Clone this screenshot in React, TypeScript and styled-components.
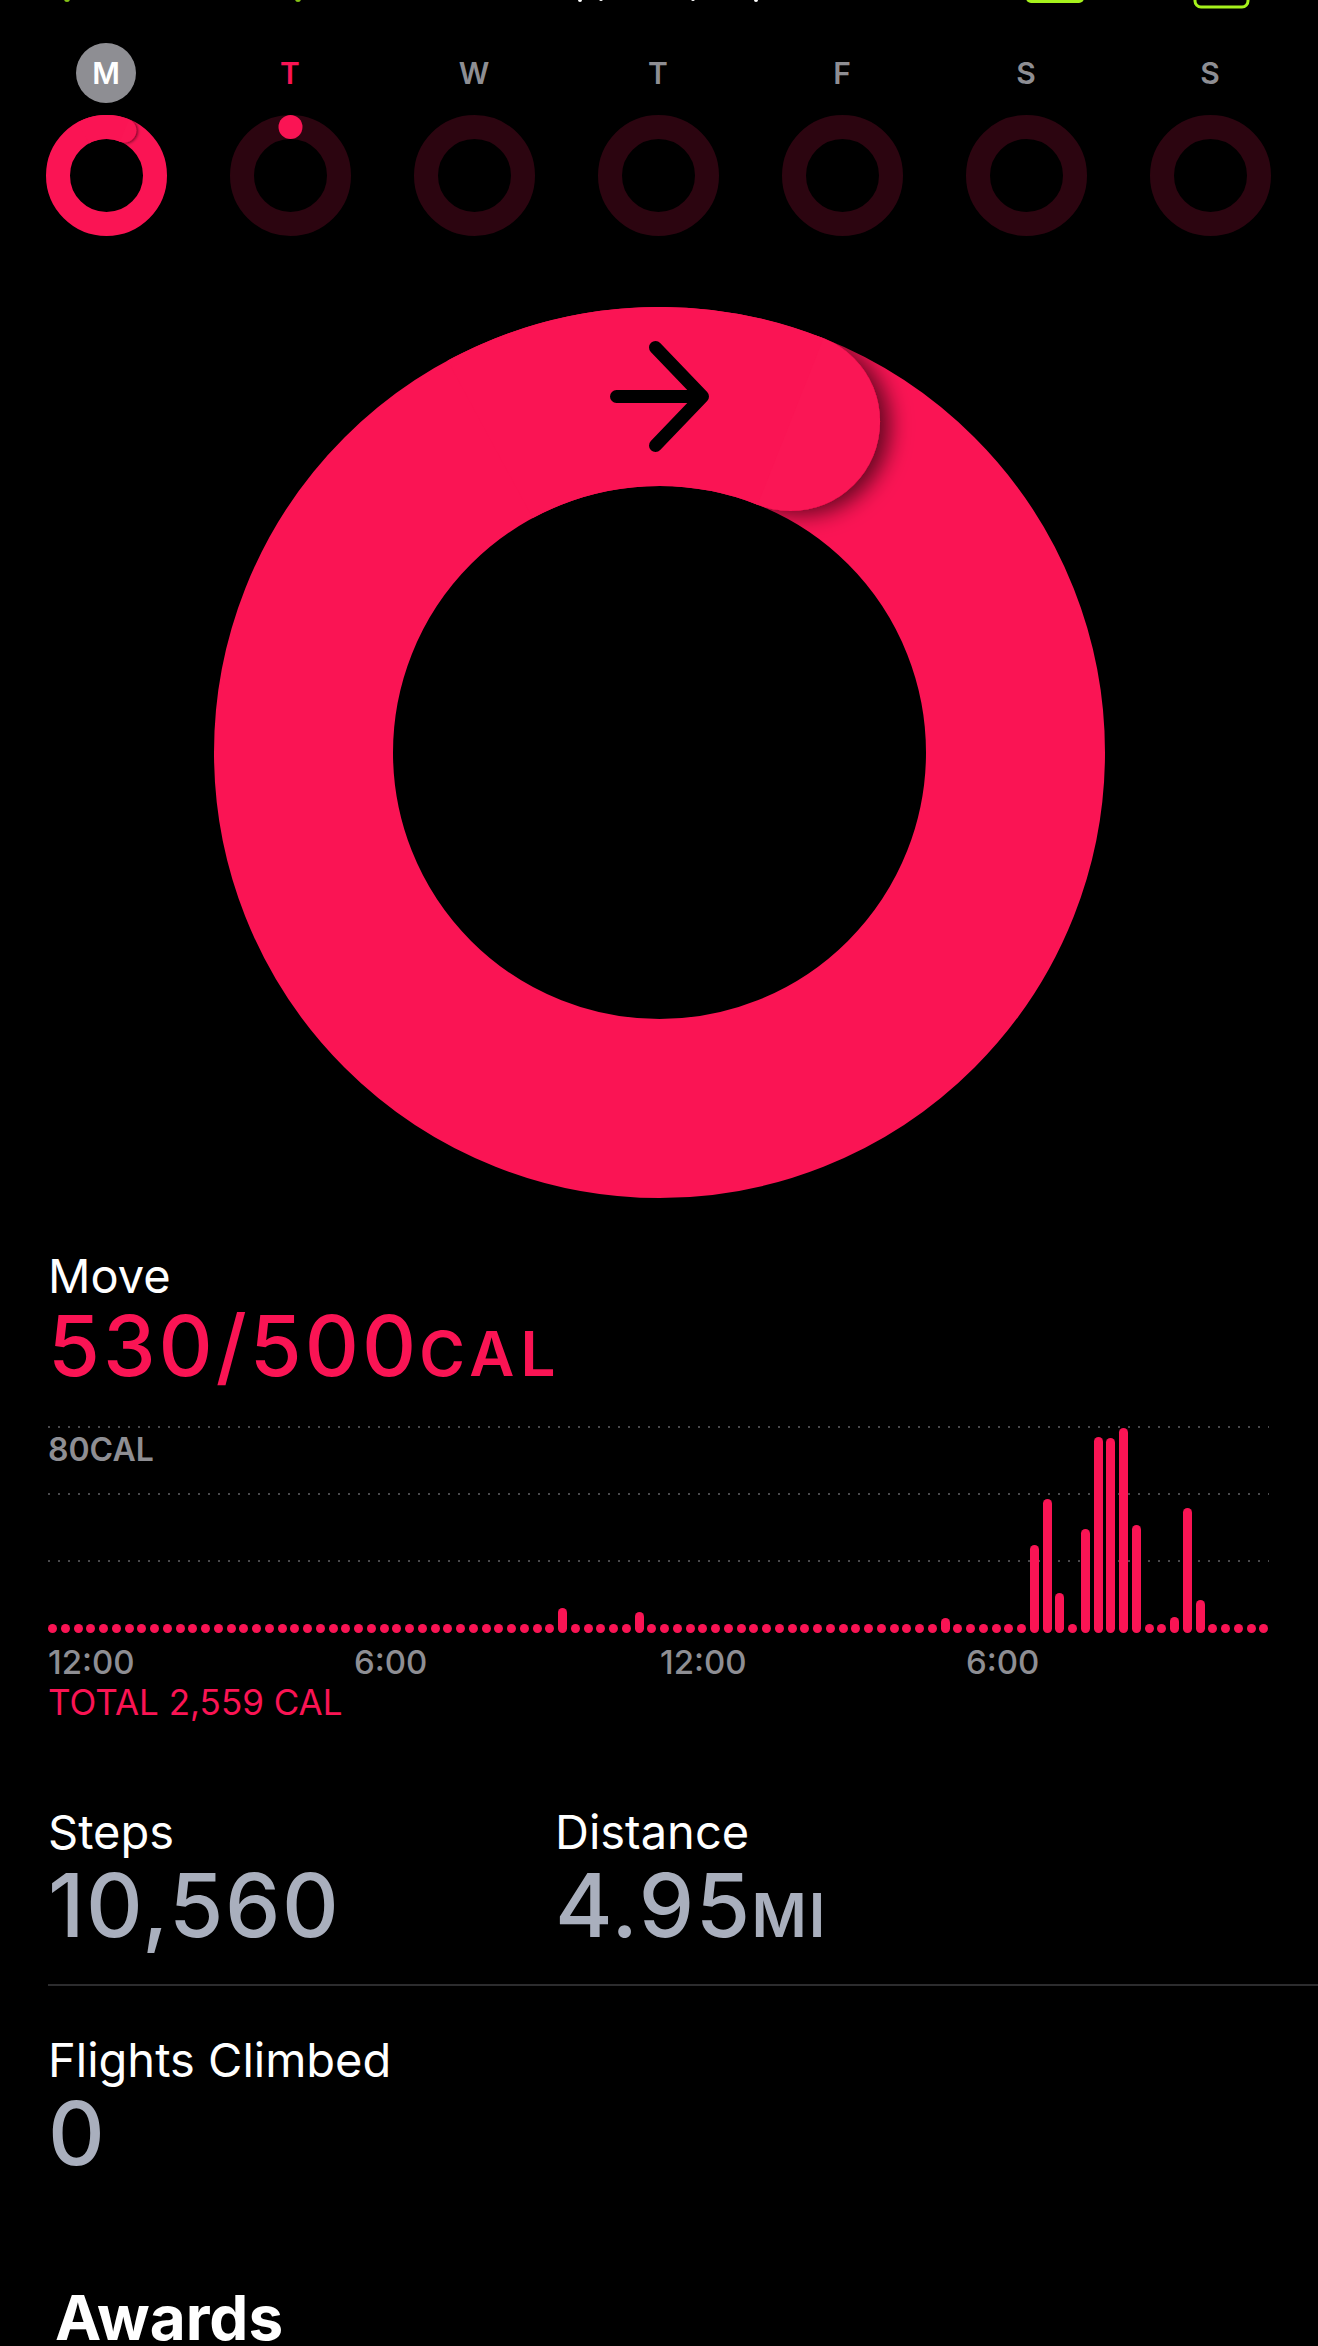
import { useId } from 'react';
import styled, { createGlobalStyle } from 'styled-components';

const PINK = '#fa1454';
const DIM = '#2c0510';
const GRAY = '#8e8e93';
const VALUE = '#a9afbd';
const LIME = '#a6f21c';

const GlobalStyle = createGlobalStyle`
  body {
    margin: 0;
    background: #000;
  }
  * {
    box-sizing: border-box;
  }
`;

type DayState = 'selected' | 'today' | 'future';

const days: { letter: string; state: DayState; progress?: number }[] = [
  { letter: 'M', state: 'selected', progress: 530 / 500 },
  { letter: 'T', state: 'today', progress: 0 },
  { letter: 'W', state: 'future' },
  { letter: 'T', state: 'future' },
  { letter: 'F', state: 'future' },
  { letter: 'S', state: 'future' },
  { letter: 'S', state: 'future' },
];

// quarter-hour move calories, shown as bar heights in px (9 = idle dot)
const barHeights: Record<number, number> = {
  40: 25,
  46: 21,
  70: 15,
  77: 88,
  78: 134,
  79: 40,
  81: 104,
  82: 196,
  83: 195,
  84: 205,
  85: 108,
  88: 16,
  89: 125,
  90: 33,
};
const bars = Array.from({ length: 96 }, (_, i) => barHeights[i] ?? 9);

const axis = ['12:00', '6:00', '12:00', '6:00'];

type RingProps = {
  size: number;
  stroke: number;
  progress?: number;
  arrow?: boolean;
};

function ActivityRing({ size, stroke, progress, arrow }: RingProps) {
  const id = 'ring' + useId().replace(/[^a-zA-Z0-9]/g, '');
  const c = size / 2;
  const r = (size - stroke) / 2;
  const pt = (deg: number) => {
    const a = (deg * Math.PI) / 180;
    return [c + r * Math.sin(a), c - r * Math.cos(a)];
  };

  if (progress === undefined) {
    return (
      <svg width={size} height={size} viewBox={`0 0 ${size} ${size}`}>
        <circle cx={c} cy={c} r={r} fill="none" stroke={DIM} strokeWidth={stroke} />
      </svg>
    );
  }

  if (progress === 0) {
    return (
      <svg width={size} height={size} viewBox={`0 0 ${size} ${size}`}>
        <circle cx={c} cy={c} r={r} fill="none" stroke={DIM} strokeWidth={stroke} />
        <circle cx={c} cy={c - r} r={stroke / 2} fill={PINK} />
      </svg>
    );
  }

  const over = (progress - 1) * 360;
  const [ex, ey] = pt(over);
  const [sx, sy] = pt(over - 50);
  const a = (over * Math.PI) / 180;
  const off = stroke * 0.06;

  return (
    <svg width={size} height={size} viewBox={`0 0 ${size} ${size}`}>
      <defs>
        <filter id={id} x="-50%" y="-50%" width="200%" height="200%">
          <feDropShadow
            dx={Math.cos(a) * off}
            dy={Math.sin(a) * off}
            stdDeviation={stroke * 0.06}
            floodColor="#000"
            floodOpacity="0.6"
          />
        </filter>
      </defs>
      <circle cx={c} cy={c} r={r} fill="none" stroke={PINK} strokeWidth={stroke} />
      <circle cx={ex} cy={ey} r={stroke / 2} fill={PINK} filter={`url(#${id})`} />
      <path
        d={`M ${sx} ${sy} A ${r} ${r} 0 0 1 ${ex} ${ey}`}
        fill="none"
        stroke={PINK}
        strokeWidth={stroke}
      />
      {arrow && (
        <path
          d={`M ${c - 43} ${c - r} H ${c + 40} M ${c - 4} ${c - r - 49} L ${c + 43} ${
            c - r
          } L ${c - 4} ${c - r + 49}`}
          fill="none"
          stroke="#000"
          strokeWidth={13}
          strokeLinecap="round"
          strokeLinejoin="round"
        />
      )}
    </svg>
  );
}

export default function App() {
  return (
    <>
      <GlobalStyle />
      <Screen>
        <StatusStrip width={1318} height={10} viewBox="0 0 1318 10">
          <rect x={64} y={-6} width={6} height={8} rx={3} fill={LIME} opacity={0.8} />
          <rect x={295} y={-6} width={6} height={8} rx={3} fill={LIME} opacity={0.8} />
          <rect x={578} y={-4} width={4} height={6} rx={2} fill="#fff" />
          <rect x={599} y={-4} width={4} height={5} rx={2} fill="#fff" />
          <rect x={691} y={-4} width={4} height={5} rx={2} fill="#fff" />
          <rect x={754} y={-4} width={4} height={6} rx={2} fill="#fff" />
          <rect x={1026} y={-12} width={58} height={15} rx={5} fill={LIME} />
          <rect
            x={1195}
            y={-12}
            width={53}
            height={19}
            rx={6}
            fill="none"
            stroke={LIME}
            strokeWidth={3}
          />
        </StatusStrip>

        <Week>
          {days.map((d, i) => (
            <Day key={i}>
              <DayLetter $state={d.state}>{d.letter}</DayLetter>
              <ActivityRing size={121} stroke={24} progress={d.progress} />
            </Day>
          ))}
        </Week>

        <BigRing>
          <ActivityRing size={891} stroke={179} progress={530 / 500} arrow />
        </BigRing>

        <Section>
          <Label>Move</Label>
          <MoveValue>
            530/500<Unit $size={62} $track={6}>CAL</Unit>
          </MoveValue>
        </Section>

        <Chart>
          <GridLayer>
            <GridLine />
            <GridBand>
              <ScaleLabel>80CAL</ScaleLabel>
            </GridBand>
            <GridLine />
            <GridBand />
            <GridLine />
          </GridLayer>
          <BarLayer>
            {bars.map((h, i) => (
              <Bar key={i} style={{ height: h }} />
            ))}
          </BarLayer>
        </Chart>
        <Axis>
          {axis.map((t, i) => (
            <AxisLabel key={i}>{t}</AxisLabel>
          ))}
        </Axis>
        <Section>
          <Total>TOTAL 2,559 CAL</Total>
        </Section>

        <Stats>
          <StatRow>
            <div>
              <Label>Steps</Label>
              <StatValue>10,560</StatValue>
            </div>
            <div>
              <Label>Distance</Label>
              <StatValue>
                4.95<Unit $size={60} $track={2}>MI</Unit>
              </StatValue>
            </div>
          </StatRow>
          <Divider />
          <FlightsBlock>
            <Label>Flights Climbed</Label>
            <StatValue>0</StatValue>
          </FlightsBlock>
        </Stats>

        <SectionTitle>Awards</SectionTitle>
      </Screen>
    </>
  );
}

const Screen = styled.div`
  width: 1318px;
  height: 2346px;
  overflow: hidden;
  background: #000;
  color: #fff;
  font-family: Inter, 'Liberation Sans', sans-serif;
`;

const StatusStrip = styled.svg`
  display: block;
`;

const Week = styled.div`
  display: grid;
  grid-template-columns: repeat(7, 184px);
  padding: 33px 14px 0;
`;

const Day = styled.div`
  display: flex;
  flex-direction: column;
  align-items: center;
  gap: 12px;

  svg {
    display: block;
  }
`;

const DayLetter = styled.div<{ $state: DayState }>`
  width: 60px;
  height: 60px;
  border-radius: 50%;
  display: flex;
  align-items: center;
  justify-content: center;
  font-size: 30px;
  font-weight: 600;
  background: ${(p) => (p.$state === 'selected' ? GRAY : 'transparent')};
  color: ${(p) =>
    p.$state === 'selected' ? '#fff' : p.$state === 'today' ? PINK : GRAY};
`;

const BigRing = styled.div`
  display: flex;
  justify-content: center;
  margin-top: 71px;

  svg {
    display: block;
  }
`;

const Section = styled.div`
  padding-left: 48px;
`;

const Label = styled.div`
  font-size: 47px;
  line-height: 1;
  font-weight: 400;
  color: #fff;
  margin-top: 54px;
`;

const MoveValue = styled.div`
  font-size: 84px;
  line-height: 1;
  font-weight: 500;
  letter-spacing: 3px;
  color: ${PINK};
  margin-top: 5px;
`;

const Unit = styled.span<{ $size: number; $track: number }>`
  font-size: ${(p) => p.$size}px;
  font-weight: 600;
  letter-spacing: ${(p) => p.$track}px;
`;

const Chart = styled.div`
  display: grid;
  width: 1221px;
  height: 208px;
  margin: 38px 0 0 48px;

  & > * {
    grid-area: 1 / 1;
  }
`;

const GridLayer = styled.div`
  display: flex;
  flex-direction: column;
`;

const GridLine = styled.div`
  height: 2px;
  width: 100%;
  background-image: linear-gradient(to right, #4a4a4d 2px, transparent 2px);
  background-size: 10px 2px;
`;

const GridBand = styled.div`
  height: 65px;
  padding-top: 6px;
`;

const ScaleLabel = styled.div`
  font-size: 32px;
  line-height: 1;
  font-weight: 600;
  color: ${GRAY};
`;

const BarLayer = styled.div`
  display: flex;
  justify-content: space-between;
  align-items: flex-end;
  padding-bottom: 1px;
`;

const Bar = styled.div`
  width: 9px;
  border-radius: 4.5px;
  background: ${PINK};
`;

const Axis = styled.div`
  display: grid;
  grid-template-columns: repeat(4, 306px);
  margin: 12px 0 0 48px;
`;

const AxisLabel = styled.div`
  font-size: 33px;
  line-height: 1;
  font-weight: 500;
  color: ${GRAY};
`;

const Total = styled.div`
  font-size: 35px;
  line-height: 1;
  color: ${PINK};
  margin-top: 6px;
`;

const Stats = styled.div`
  padding-left: 48px;
  margin-top: 34px;
`;

const StatRow = styled.div`
  display: grid;
  grid-template-columns: 507px 1fr;
`;

const StatValue = styled.div`
  font-size: 88px;
  line-height: 1;
  font-weight: 500;
  letter-spacing: 1.5px;
  color: ${VALUE};
  margin-top: 6px;
`;

const Divider = styled.div`
  height: 2px;
  background: #2c2c2e;
  margin-top: 35px;
`;

const FlightsBlock = styled.div`
  margin-top: -4px;
`;

const SectionTitle = styled.h2`
  margin: 110px 0 0 55px;
  font-size: 62px;
  line-height: 1;
  font-weight: 700;
  color: #fff;
`;
